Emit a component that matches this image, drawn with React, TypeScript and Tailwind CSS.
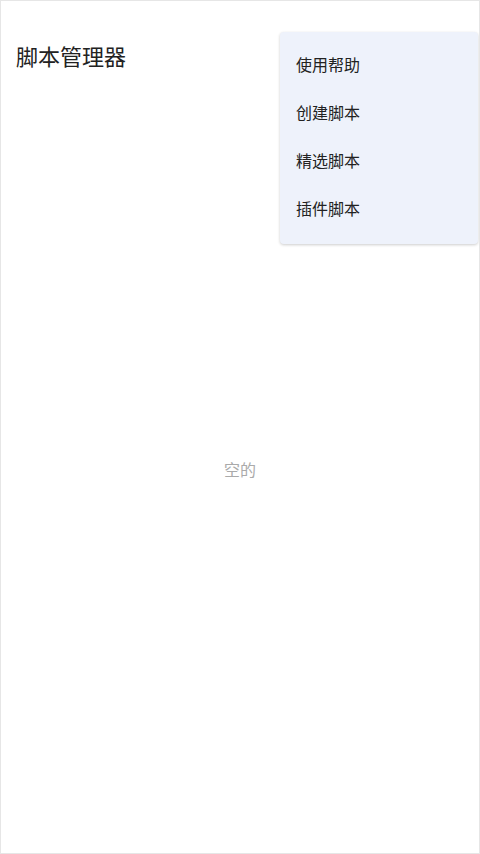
const font = { fontFamily: '"Noto Sans", "Noto Sans CJK SC", sans-serif' };

const menuItems = ["使用帮助", "创建脚本", "精选脚本", "插件脚本"];

export default function App() {
    return (
        <div
            className="relative w-[480px] h-[854px] bg-white border border-[#e6e6e6] overflow-hidden"
            style={font}
        >
            <div className="flex items-center h-[56px] mt-[27px] px-[15px]">
                <span className="text-[22px] text-[#222222]">脚本管理器</span>
            </div>
            <div className="flex items-center justify-center h-[770px] pb-[60px]">
                <span className="text-[16px] text-[#aaaaaa] mt-[62px]">空的</span>
            </div>

            {/* overflow menu */}
            <div className="absolute left-[279px] top-[31px] w-[198px] pt-[9px] pb-[11px] rounded-[4px] bg-[#eef2fb] shadow-[0_1px_3px_rgba(0,0,0,0.2)]">
                {menuItems.map((item) => (
                    <div key={item} className="flex items-center h-[48px] pl-[16px] text-[16px] text-[#222222]">
                        {item}
                    </div>
                ))}
            </div>
        </div>
    );
}
